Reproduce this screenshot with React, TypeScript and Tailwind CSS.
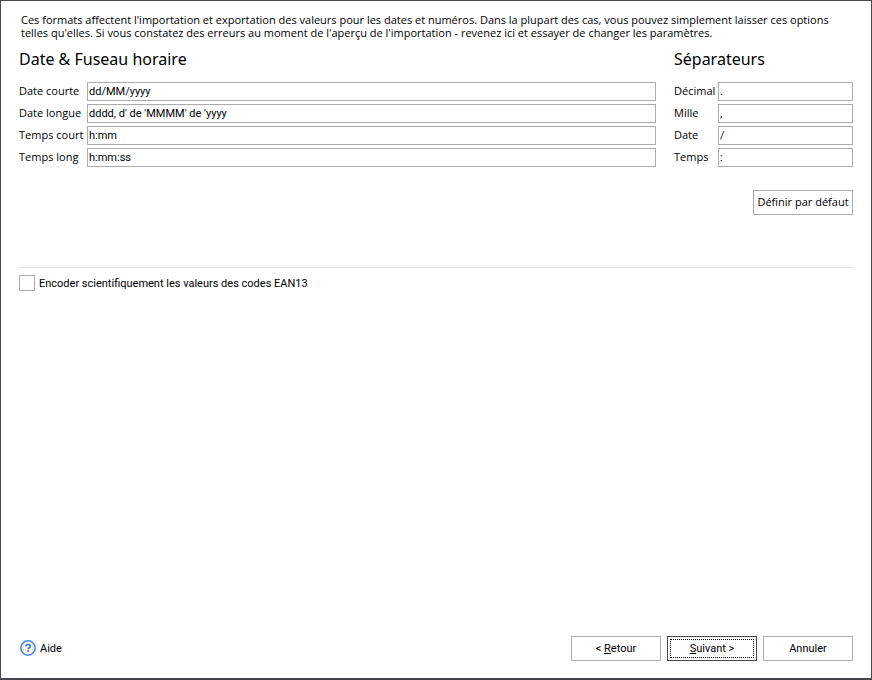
import type { ReactNode } from "react";

const dateFields = [
  { id: "short-date", label: "Date courte", value: "dd/MM/yyyy" },
  { id: "long-date", label: "Date longue", value: "dddd, d' de 'MMMM' de 'yyyy" },
  { id: "short-time", label: "Temps court", value: "h:mm" },
  { id: "long-time", label: "Temps long", value: "h:mm:ss" },
];

const separatorFields = [
  { id: "decimal", label: "Décimal", value: "." },
  { id: "thousand", label: "Mille", value: "," },
  { id: "date-separator", label: "Date", value: "/" },
  { id: "time-separator", label: "Temps", value: ":" },
];

type FieldProps = { id: string; label: string; value: string; labelClass: string };

const Field = ({ id, label, value, labelClass }: FieldProps) => (
  <div className="flex items-center">
    <label htmlFor={id} className={`shrink-0 pb-0.5 whitespace-nowrap ${labelClass}`}>
      {label}
    </label>
    <input
      id={id}
      type="text"
      defaultValue={value}
      className="h-[19px] min-w-0 flex-1 border border-[#ababab] bg-white px-px font-[Roboto,sans-serif] outline-none"
    />
  </div>
);

const FooterButton = ({ children }: { children: ReactNode }) => (
  <button type="button" className="h-[25px] w-[90px] border border-[#ababab] bg-white">
    {children}
  </button>
);

const HelpIcon = () => (
  <svg width="16" height="16" viewBox="0 0 16 16" fill="none" stroke="#4285e4" aria-hidden="true">
    <circle cx="8" cy="8" r="7.2" strokeWidth="1.5" />
    <path d="M5.8 6.3C5.8 5 6.7 4.4 8 4.4s2.2.6 2.2 1.8c0 1.5-2.1 1.5-2.1 3" strokeWidth="1.8" />
    <path d="M8.1 10.2v1.8" strokeWidth="2" />
  </svg>
);

export default function App() {
  return (
    <main className="flex min-h-screen flex-col border border-b-2 border-[#47464b] bg-white px-[18px] pt-3 pb-[17px] font-['Open_Sans',sans-serif] text-[11px] leading-[13px] text-black">
      <p className="px-0.5">
        Ces formats affectent l'importation et exportation des valeurs pour les dates et numéros. Dans la plupart des
        cas, vous pouvez simplement laisser ces options
        <br />
        telles qu'elles. Si vous constatez des erreurs au moment de l'aperçu de l'importation - revenez ici et essayer
        de changer les paramètres.
      </p>

      <div className="mt-2 flex gap-[18px]">
        <section className="flex-1">
          <h2 className="font-['Noto_Sans',sans-serif] text-base leading-6">Date &amp; Fuseau horaire</h2>
          <div className="mt-[11px] flex flex-col gap-[3px]">
            {dateFields.map((field) => (
              <Field key={field.id} {...field} labelClass="w-[68px]" />
            ))}
          </div>
        </section>
        <section className="w-[179px]">
          <h2 className="font-['Noto_Sans',sans-serif] text-base leading-6">Séparateurs</h2>
          <div className="mt-[11px] flex flex-col gap-[3px]">
            {separatorFields.map((field) => (
              <Field key={field.id} {...field} labelClass="w-11" />
            ))}
          </div>
        </section>
      </div>

      <button
        type="button"
        className="mt-[23px] h-[25px] w-[100px] self-end border border-[#ababab] bg-white pb-0.5 whitespace-nowrap"
      >
        Définir par défaut
      </button>

      <hr className="mt-[52px] border-[#e1e1e1]" />
      <label className="mt-[7px] flex items-center gap-1 self-start font-[Roboto,sans-serif]">
        <input type="checkbox" className="size-4 appearance-none border border-[#ababab] bg-white" />
        Encoder scientifiquement les valeurs des codes EAN13
      </label>

      <footer className="mt-auto flex items-center justify-between font-[Roboto,sans-serif]">
        <a href="#aide" className="ml-px flex items-center gap-1 pb-px">
          <HelpIcon />
          Aide
        </a>
        <div className="flex gap-1.5">
          <FooterButton>
            &lt; <u>R</u>etour
          </FooterButton>
          <button type="button" className="h-[25px] w-[90px] border border-[#47464b] bg-white p-0.5">
            <span className="flex h-full items-center justify-center border border-dotted border-black whitespace-pre">
              <span>
                <u>S</u>uivant &gt;
              </span>
            </span>
          </button>
          <FooterButton>Annuler</FooterButton>
        </div>
      </footer>
    </main>
  );
}
